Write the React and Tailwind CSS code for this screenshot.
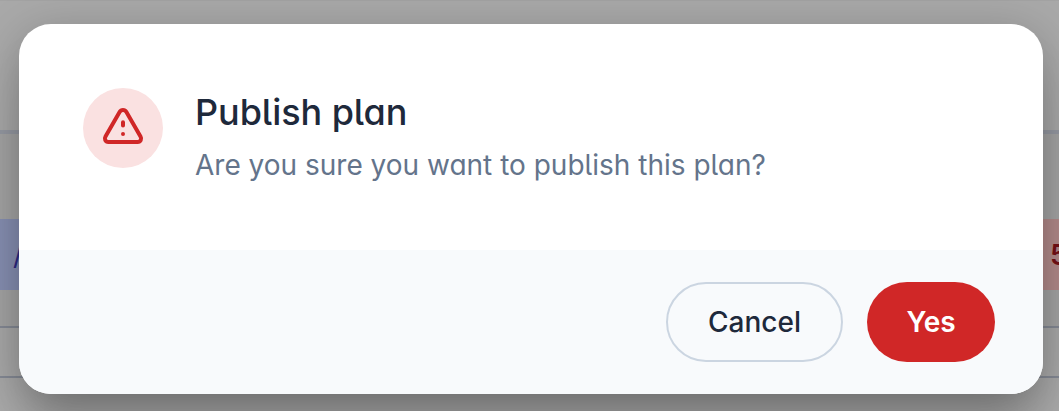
function WarningIcon() {
  return (
    <svg className="h-[50px] w-[50px] shrink-0 -translate-y-px" viewBox="0 0 50 50" fill="none" stroke="#d02727" strokeWidth="4" strokeLinecap="round" strokeLinejoin="round">
      <path d="M21.6 10 7.5 34.4C6 37 7.3 40 10.4 40H39.6C42.7 40 44 37 42.5 34.4L28.4 10C26.9 7.4 23.1 7.4 21.6 10Z" />
      <path d="M25 20.2V23.6M25 32V32.01" />
    </svg>
  );
}

function Backdrop() {
  return (
    <div className="flex h-full flex-col bg-[#a9a9a9] text-[28px] leading-none">
      <div className="h-[130px] border-t border-[#a3a3a3]" />
      <div className="h-1 bg-[#969aa3]" />
      <div className="h-[85px] bg-[#a5a5a5]" />
      <div className="flex h-[71px] items-center justify-between overflow-hidden">
        <div className="flex h-full w-[60px] items-center bg-[#8790b3] pl-[13px] text-[#2d2a85]">/</div>
        <div className="flex h-full w-[60px] items-center overflow-hidden bg-[#b38b8b] pl-[51px] font-semibold text-[#751016]">5</div>
      </div>
      <div className="h-[38px] border-b-2 border-[#858a95] bg-[#a5a5a5]" />
      <div className="h-[50px] border-b-2 border-[#858a95] bg-[#a9a9a9]" />
      <div className="flex-1 bg-[#a9a9a9]" />
    </div>
  );
}

export default function App() {
  return (
    <div className="relative h-[411px] w-[1059px] overflow-hidden font-['Inter',sans-serif]">
      <Backdrop />
      <div className="absolute inset-0 flex pt-6 pl-[19px]">
        <div role="dialog" className="flex h-[370px] w-[1024px] flex-col overflow-hidden rounded-[32px] bg-white shadow-[0_40px_50px_-10px_rgba(0,0,0,0.2),0_8px_48px_0_rgba(0,0,0,0.22)]">
          <div className="flex h-[226px] gap-8 p-16">
            <div className="flex h-20 w-20 shrink-0 items-center justify-center rounded-full bg-[#fae1e1]">
              <WarningIcon />
            </div>
            <div className="[font-feature-settings:'cv05','cv11']">
              <h1 className="text-[36px] leading-[48px] font-medium tracking-[-0.05px] text-[#1e293b]">Publish plan</h1>
              <p className="mt-2 text-[28px] leading-[42px] text-[#64748b]">Are you sure you want to publish this plan?</p>
            </div>
          </div>
          <div className="flex h-36 items-center justify-end gap-6 bg-[#f8fafc] px-12 text-[28px] font-medium">
            <button className="h-20 w-[177px] rounded-full border-2 border-[#cbd5e1] text-[#1e293b]">Cancel</button>
            <button className="h-20 w-32 rounded-full bg-[#d02727] font-semibold text-white">Yes</button>
          </div>
        </div>
      </div>
    </div>
  );
}
